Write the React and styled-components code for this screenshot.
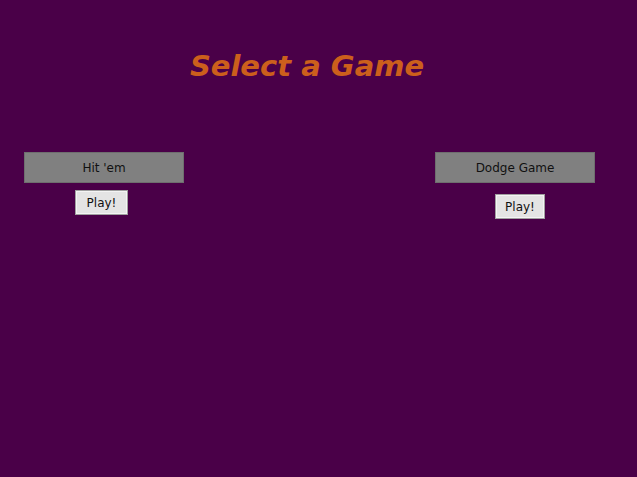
import React from "react";
import styled, { createGlobalStyle } from "styled-components";

const GlobalStyle = createGlobalStyle`
  html, body {
    margin: 0;
    padding: 0;
    background: #4a0048;
  }
  body {
    font-family: "DejaVu Sans", Verdana, sans-serif;
  }
`;

const Page = styled.div`
  width: 637px;
  height: 477px;
  background: #4a0048;
  display: flex;
  flex-direction: column;
`;

const Title = styled.h1`
  margin: 49px 0 0;
  text-align: center;
  font-family: "DejaVu Sans", sans-serif;
  font-style: italic;
  font-weight: bold;
  font-size: 29px;
  color: #cc5f1c;
  padding-right: 23px;
`;

const Games = styled.div`
  display: flex;
  justify-content: space-between;
  padding: 0 42px 0 24px;
  margin-top: 69px;
`;

const Game = styled.div`
  display: flex;
  flex-direction: column;
  width: 160px;
`;

const Name = styled.div`
  height: 29px;
  background: #808080;
  border: 1px solid #6e6e6e;
  display: flex;
  align-items: center;
  justify-content: center;
  font-family: "DejaVu Sans", sans-serif;
  font-size: 12px;
  color: #111;
`;

const PlayButton = styled.button`
  align-self: flex-start;
  margin-top: ${p => p.$top}px;
  margin-left: ${p => p.$left}px;
  width: ${p => p.$width}px;
  height: 25px;
  padding: 0;
  background: #e4e4e4;
  border: 2px solid #f4f4f4;
  outline: 1px solid #a0a0a0;
  outline-offset: -1px;
  font-family: "DejaVu Sans", sans-serif;
  font-size: 12px;
  color: #111;
  cursor: pointer;
`;

const games = [
  { name: "Hit 'em", top: 7, left: 51, width: 53 },
  { name: "Dodge Game", top: 11, left: 60, width: 50 },
];

export default function App() {
  return (
    <>
      <GlobalStyle />
      <Page>
        <Title>Select a Game</Title>
        <Games>
          {games.map(g => (
            <Game key={g.name}>
              <Name>{g.name}</Name>
              <PlayButton $top={g.top} $left={g.left} $width={g.width}>
                Play!
              </PlayButton>
            </Game>
          ))}
        </Games>
      </Page>
    </>
  );
}
